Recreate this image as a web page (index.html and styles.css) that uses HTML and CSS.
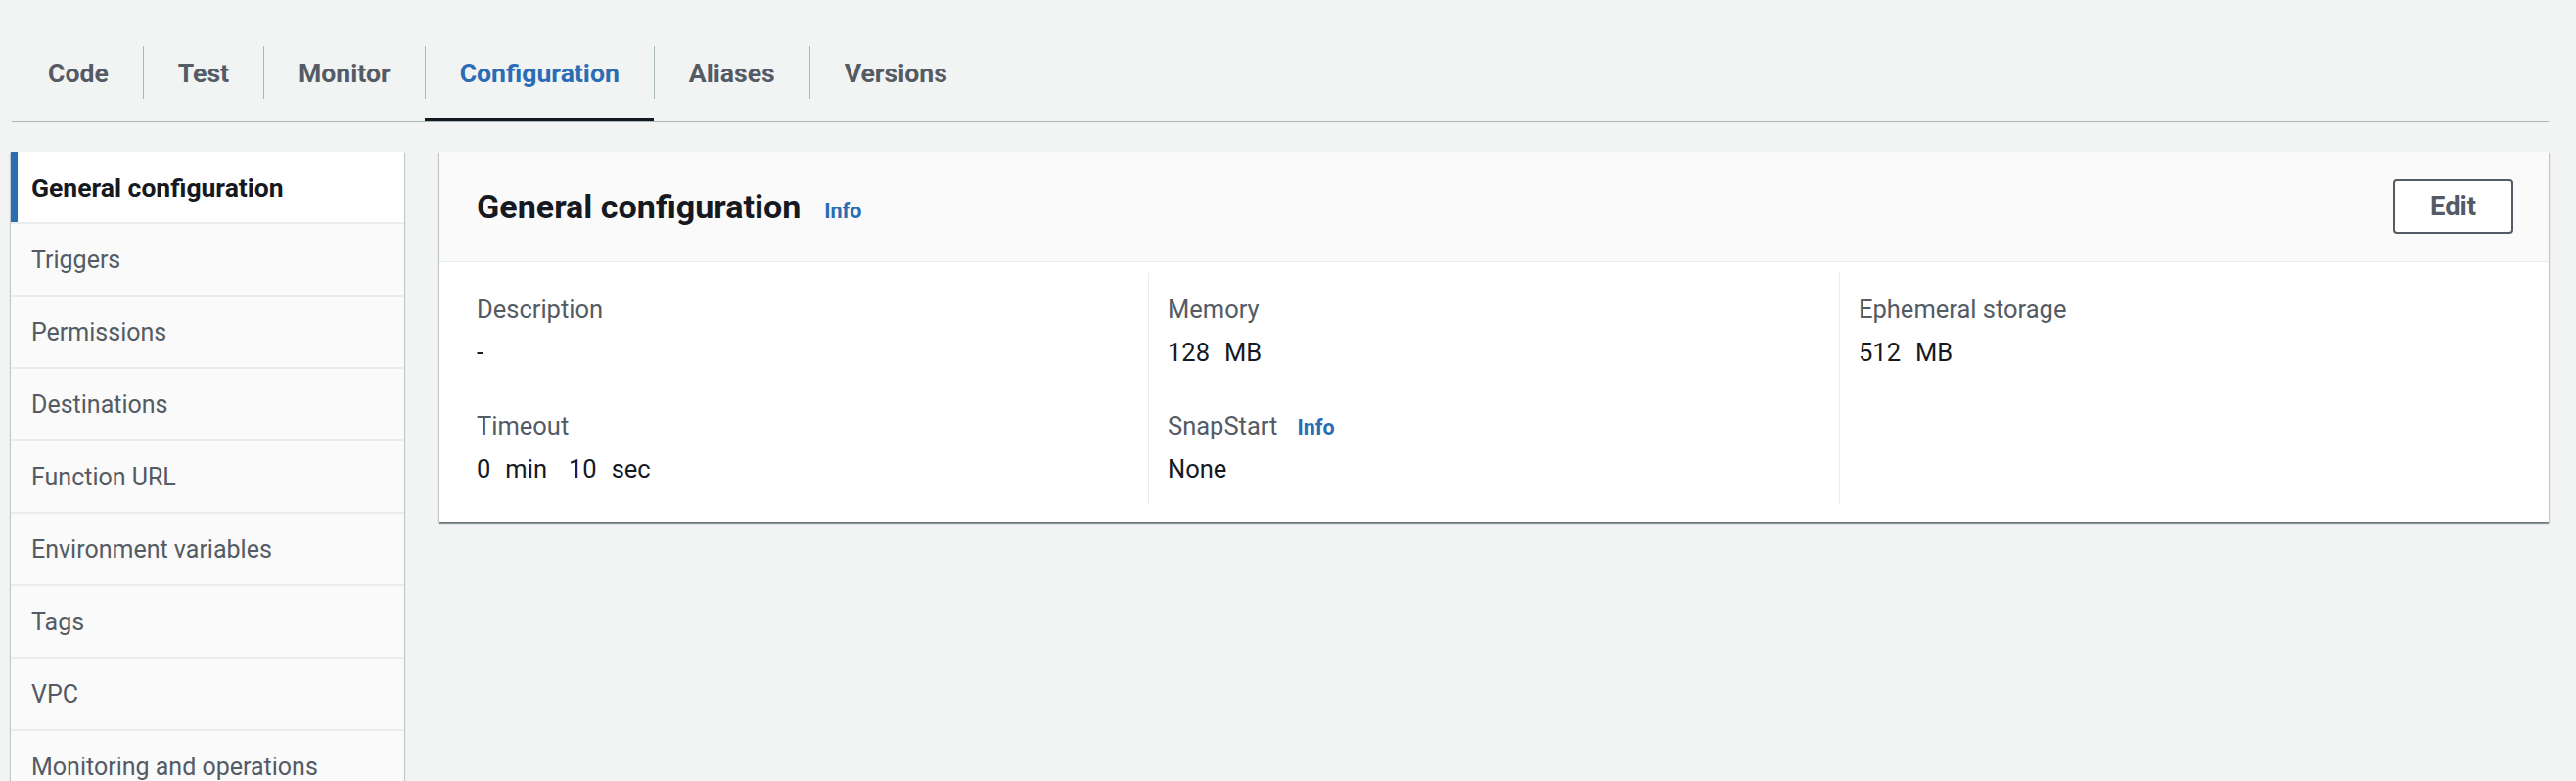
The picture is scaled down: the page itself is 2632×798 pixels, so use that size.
FILE: index.html
```html
<!DOCTYPE html>
<html lang="en">
<head>
<meta charset="utf-8">
<title>Configuration</title>
<link rel="stylesheet" href="styles.css">
</head>
<body>
<div class="page">
  <nav class="tabs">
    <div class="tab first"><span class="tab-label">Code</span></div>
    <div class="tab"><span class="tab-label">Test</span></div>
    <div class="tab"><span class="tab-label">Monitor</span></div>
    <div class="tab active"><span class="tab-label">Configuration</span></div>
    <div class="tab"><span class="tab-label">Aliases</span></div>
    <div class="tab"><span class="tab-label">Versions</span></div>
  </nav>
  <div class="layout">
    <aside class="sidenav">
      <a class="nav-item active">General configuration</a>
      <a class="nav-item">Triggers</a>
      <a class="nav-item">Permissions</a>
      <a class="nav-item">Destinations</a>
      <a class="nav-item">Function URL</a>
      <a class="nav-item">Environment variables</a>
      <a class="nav-item">Tags</a>
      <a class="nav-item">VPC</a>
      <a class="nav-item">Monitoring and operations</a>
    </aside>
    <section class="card">
      <header class="card-header">
        <div class="title">
          <h2>General configuration</h2>
          <a class="info">Info</a>
        </div>
        <button class="btn">Edit</button>
      </header>
      <div class="card-body">
        <div class="col">
          <div class="pair">
            <div class="label">Description</div>
            <div class="value">-</div>
          </div>
          <div class="pair">
            <div class="label">Timeout</div>
            <div class="value"><span>0</span><span class="u">min</span><span class="g">10</span><span class="u">sec</span></div>
          </div>
        </div>
        <div class="col">
          <div class="pair">
            <div class="label">Memory</div>
            <div class="value"><span>128</span><span class="u">MB</span></div>
          </div>
          <div class="pair">
            <div class="label">SnapStart<a class="info small">Info</a></div>
            <div class="value">None</div>
          </div>
        </div>
        <div class="col">
          <div class="pair">
            <div class="label">Ephemeral storage</div>
            <div class="value"><span>512</span><span class="u">MB</span></div>
          </div>
        </div>
      </div>
    </section>
  </div>
</div>
</body>
</html>
```

FILE: styles.css
```css
* { box-sizing: border-box; }
body {
  margin: 0;
  background: #f2f3f3;
  font-family: Roboto, "Liberation Sans", sans-serif;
  color: #16191f;
  overflow: hidden;
}
.page { padding: 0 28px 0 12px; }

/* tabs */
.tabs {
  display: flex;
  padding-top: 47px;
  border-bottom: 1px solid #aab7b8;
}
.tab {
  border-bottom: 3px solid transparent;
  padding-bottom: 20px;
}
.tab.active { border-bottom-color: #16191f; }
.tab-label {
  display: flex;
  align-items: center;
  height: 54px;
  padding: 1px 35px 0;
  font-size: 26.6px;
  font-weight: 700;
  color: #545b64;
  white-space: nowrap;
}
.tab.first .tab-label { padding-left: 37px; }
.tab + .tab .tab-label { border-left: 1px solid #aab7b8; }
.tab.active .tab-label { color: #2a6db5; }

/* layout */
.layout {
  display: flex;
  align-items: flex-start;
  gap: 36px;
  margin-top: 30px;
}

/* side nav */
.sidenav {
  flex: none;
  width: 402px;
  margin-left: -1px;
  background: #fafafa;
  box-shadow: 0 1px 1px 0 rgba(0,28,36,.3), 1px 1px 1px 0 rgba(0,28,36,.15), -1px 1px 1px 0 rgba(0,28,36,.15);
}
.nav-item {
  display: flex;
  align-items: center;
  height: 74px;
  padding: 1px 0 0 21px;
  border-bottom: 2px solid #eaeded;
  font-size: 25px;
  color: #545b64;
  white-space: nowrap;
}
.nav-item.active {
  background: #fff;
  color: #16191f;
  font-size: 26.5px;
  font-weight: 700;
  box-shadow: inset 7px 0 0 #2a6db5;
}

/* card */
.card {
  flex: 1;
  background: #fff;
  box-shadow: 0 2px 1px 0 rgba(0,28,36,.4), 1px 1px 1px 0 rgba(0,28,36,.15), -1px 1px 1px 0 rgba(0,28,36,.15);
}
.card-header {
  display: flex;
  align-items: center;
  height: 113px;
  padding: 0 36px 0 38px;
  background: #fafafa;
  border-bottom: 1px solid #eaeded;
}
.title {
  display: flex;
  align-items: baseline;
}
.title h2 {
  margin: 0;
  font-size: 34.1px;
  font-weight: 700;
  color: #16191f;
}
.info {
  margin-left: 24px;
  font-size: 21.5px;
  font-weight: 700;
  color: #2a6db5;
}
.info.small {
  margin-left: 20px;
  line-height: 1;
}
.btn {
  margin-left: auto;
  height: 56px;
  padding: 0 36px;
  border: 2px solid #545b64;
  border-radius: 4px;
  background: #fff;
  font-family: Roboto, "Liberation Sans", sans-serif;
  font-size: 27.3px;
  font-weight: 700;
  color: #545b64;
}
.card-body {
  display: grid;
  grid-template-columns: repeat(3, 1fr);
  padding: 11px 19px 17px 18px;
}
.col { padding: 19px 20px 18px 20px; }
.col + .col {
  border-left: 1px solid #eaeded;
  padding-left: 19px;
}
.pair + .pair { margin-top: 37.5px; }
.label {
  font-size: 25.5px;
  line-height: 37px;
  color: #545b64;
  white-space: nowrap;
}
.value {
  margin-top: 7px;
  font-size: 25.5px;
  line-height: 37px;
  color: #16191f;
  white-space: nowrap;
}
.value .u { margin-left: 15px; }
.value .g { margin-left: 22px; }
```
